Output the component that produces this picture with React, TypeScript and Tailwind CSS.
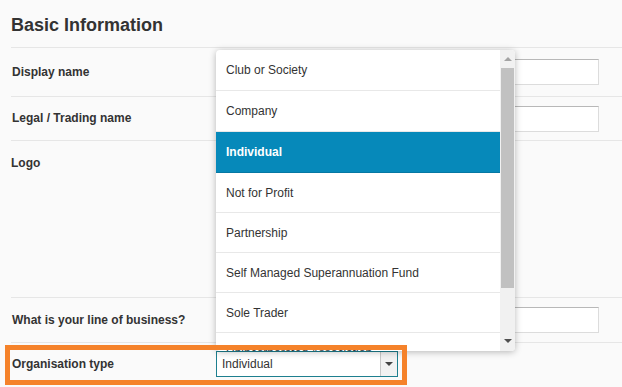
import React from "react";

const items = [
  "Club or Society",
  "Company",
  "Individual",
  "Not for Profit",
  "Partnership",
  "Self Managed Superannuation Fund",
  "Sole Trader",
  "Unincorporated Association",
];

function TextInput() {
  return (
    <div className="h-[26px] w-[383px] bg-white border border-[#dcdcdc] border-t-[#b8b8b8]" />
  );
}

export default function App() {
  return (
    <div
      className="relative w-[622px] h-[387px] overflow-hidden bg-[#fafafa] text-[#333]"
      style={{ fontFamily: '"Liberation Sans", Arial, sans-serif' }}
    >
      <div className="ml-[11px] flex flex-col">
        <div className="h-[48px] border-b border-[#e6e6e6] flex items-center pt-[3px]">
          <h1 className="text-[18px] font-bold leading-none">Basic Information</h1>
        </div>
        <div className="h-[49px] border-b border-[#e6e6e6] flex items-center">
          <div className="w-[205px] pl-[1px] text-[12px] font-bold">Display name</div>
          <TextInput />
        </div>
        <div className="h-[44px] border-b border-[#e6e6e6] flex items-center">
          <div className="w-[205px] pl-[1px] text-[12px] font-bold -mt-[1px]">Legal / Trading name</div>
          <TextInput />
        </div>
        <div className="h-[157px] border-b border-[#e6e6e6] flex items-start pt-[13px]">
          <div className="w-[205px] text-[12px] font-bold">Logo</div>
        </div>
        <div className="h-[45px] border-b border-[#e6e6e6] flex items-center">
          <div className="w-[205px] pl-[1px] text-[12px] font-bold">What is your line of business?</div>
          <TextInput />
        </div>
        <div className="h-[44px] flex items-center -mt-[1px]">
          <div className="w-[205px] pl-[1px] text-[12px] font-bold">Organisation type</div>
          <div className="h-[26px] w-[182px] bg-white border border-[#1d7f8f] flex items-center">
            <span className="flex-1 pl-[5px] text-[12px]">Individual</span>
            <div className="w-[17px] h-full border-l border-[#c8c8c8] bg-[#f2f2f2] flex items-center justify-center">
              <div className="w-0 h-0 border-l-[4px] border-r-[4px] border-t-[4px] border-l-transparent border-r-transparent border-t-[#444]" />
            </div>
          </div>
        </div>
      </div>

      {/* Dropdown list */}
      <div className="absolute left-[216px] top-[50px] w-[299px] h-[301px] bg-white rounded-[4px] shadow-[0_1px_7px_rgba(0,0,0,0.28)] overflow-hidden flex">
        <div className="flex-1 flex flex-col">
          {items.map((it, i) => {
            const active = it === "Individual";
            const h = i < 3 ? "h-[41px]" : "h-[40px]";
            return (
              <div
                key={it}
                className={
                  active
                    ? `${h} shrink-0 flex items-center pl-[10px] text-[12px] font-bold text-white bg-[#0689ba] border-b border-[#0678a3]`
                    : `${h} shrink-0 flex items-center pl-[10px] text-[12px] text-[#333] border-b border-[#e8e8e8]`
                }
              >
                {it}
              </div>
            );
          })}
        </div>
        <div className="w-[15px] h-full bg-[#f1f1f1] flex flex-col items-center">
          <div className="h-[18px] w-full flex items-center justify-center">
            <div className="w-0 h-0 border-l-[4px] border-r-[4px] border-b-[4px] border-l-transparent border-r-transparent border-b-[#a3a3a3]" />
          </div>
          <div className="w-[13px] h-[220px] bg-[#c1c1c1]" />
          <div className="flex-1" />
          <div className="h-[18px] w-full flex items-center justify-center pb-[2px]">
            <div className="w-0 h-0 border-l-[4px] border-r-[4px] border-t-[4px] border-l-transparent border-r-transparent border-t-[#505050]" />
          </div>
        </div>
      </div>

      {/* Annotation highlight */}
      <div className="absolute left-[5px] top-[345px] w-[402px] h-[40px] border-[5px] border-[#f5822a] pointer-events-none" />
    </div>
  );
}
